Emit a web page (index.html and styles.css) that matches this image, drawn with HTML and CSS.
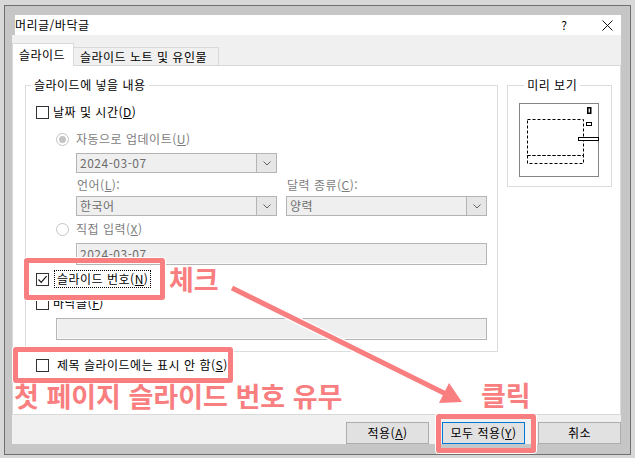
FILE: index.html
```html
<!DOCTYPE html>
<html lang="ko">
<head>
<meta charset="utf-8">
<title>머리글/바닥글</title>
<link rel="stylesheet" href="styles.css">
</head>
<body>
<div class="window">
  <div class="titlebar">
    <span class="title">머리글/바닥글</span>
    <span class="help">?</span>
    <svg class="close" width="11" height="11" viewBox="0 0 11 11"><path d="M0.5 0.5L10.5 10.5M10.5 0.5L0.5 10.5" stroke="#111" stroke-width="1" fill="none"/></svg>
  </div>
  <div class="dlg-body">
    <div class="tabs">
      <div class="tab tab-active">슬라이드</div>
      <div class="tab tab-other">슬라이드 노트 및 유인물</div>
    </div>
    <div class="panel">
      <div class="groups">
        <fieldset class="group group-main">
          <legend>슬라이드에 넣을 내용</legend>
          <div class="row row-check r1"><span class="check"></span><span class="lbl">날짜 및 시간(<u>D</u>)</span></div>
          <div class="row row-radio r2"><span class="radio radio-on"></span><span class="lbl dis">자동으로 업데이트(<u>U</u>)</span></div>
          <div class="combo combo-wide r3"><span class="combo-text">2024-03-07</span><span class="combo-btn"><svg width="8" height="5" viewBox="0 0 8 5"><path d="M0.5 0.5L4 4L7.5 0.5" fill="none" stroke="#606060"/></svg></span></div>
          <div class="pair r4"><span class="lbl dis lbl-pair">언어(<u>L</u>):</span><span class="lbl dis lbl-pair">달력 종류(<u>C</u>):</span></div>
          <div class="pair r5">
            <div class="combo"><span class="combo-text">한국어</span><span class="combo-btn"><svg width="8" height="5" viewBox="0 0 8 5"><path d="M0.5 0.5L4 4L7.5 0.5" fill="none" stroke="#606060"/></svg></span></div>
            <div class="combo"><span class="combo-text">양력</span><span class="combo-btn"><svg width="8" height="5" viewBox="0 0 8 5"><path d="M0.5 0.5L4 4L7.5 0.5" fill="none" stroke="#606060"/></svg></span></div>
          </div>
          <div class="row row-radio r6"><span class="radio"></span><span class="lbl dis">직접 입력(<u>X</u>)</span></div>
          <div class="textbox textbox-date r7">2024-03-07</div>
          <div class="row row-check r8"><span class="check"><svg width="11" height="11" viewBox="0 0 11 11"><path d="M1.5 5.5L4.2 8.3L9.6 2.2" fill="none" stroke="#1a1a1a" stroke-width="1.2"/></svg></span><span class="lbl focus">슬라이드 번호(<u>N</u>)</span></div>
          <div class="row row-check r9"><span class="check"></span><span class="lbl">바닥글(<u>F</u>)</span></div>
          <div class="textbox textbox-footer r10"></div>
        </fieldset>
        <fieldset class="group group-preview">
          <legend>미리 보기</legend>
          <svg class="preview" width="80" height="74" viewBox="0 0 80 74">
            <rect x="0.5" y="0.5" width="79" height="73" fill="#fff" stroke="#858585"/>
            <rect x="8.5" y="16.5" width="56" height="36" fill="none" stroke="#000" stroke-dasharray="3 2"/>
            <rect x="8.5" y="52.5" width="56" height="8" fill="none" stroke="#000" stroke-dasharray="3 2"/>
            <rect x="68" y="4" width="4.5" height="7" fill="#000"/>
            <rect x="69.6" y="5.5" width="1.3" height="4" fill="#fff"/>
            <rect x="67.5" y="19.5" width="5" height="3" fill="#fff" stroke="#000"/>
            <rect x="59.5" y="34.5" width="20" height="3" fill="#fff" stroke="#000"/>
          </svg>
        </fieldset>
      </div>
      <div class="row row-title"><span class="check"></span><span class="lbl">제목 슬라이드에는 표시 안 함(<u>S</u>)</span></div>
    </div>
    <div class="buttons">
      <button type="button" class="btn">적용(<u>A</u>)</button>
      <button type="button" class="btn btn-default">모두 적용(<u>Y</u>)</button>
      <button type="button" class="btn">취소</button>
    </div>
  </div>
</div>

<div class="mark mark-number"></div>
<div class="mark mark-title"></div>
<div class="mark mark-apply"></div>
<div class="note note-check">체크</div>
<div class="note note-first">첫 페이지 슬라이드 번호 유무</div>
<div class="note note-click">클릭</div>
<svg class="arrow" width="635" height="458" viewBox="0 0 635 458">
  <line x1="232" y1="288" x2="446" y2="394" stroke="#fff" stroke-width="8"/>
  <polygon points="462,402 439,403 449,383" fill="#fff" stroke="#fff" stroke-width="3" stroke-linejoin="round"/>
  <line x1="232" y1="288" x2="446" y2="394" stroke="#f87e80" stroke-width="5"/>
  <polygon points="462,402 439,403 449,383" fill="#f87e80"/>
</svg>
</body>
</html>
```

FILE: styles.css
```css
* { box-sizing: border-box; }
html, body { margin: 0; }
body {
  position: relative;
  width: 635px;
  height: 458px;
  padding: 5px 0 0 4px;
  overflow: hidden;
  background: #d8d8d8;
  font-family: "Noto Sans CJK KR", "Noto Sans", sans-serif;
  font-size: 12px;
  letter-spacing: 0.5px;
  color: #000;
}
u { text-decoration: underline; text-underline-offset: 1px; }

.window {
  width: 627px;
  height: 450px;
  border: 1px solid #6f6f6f;
  background: #c6c6c6;
  padding: 9px 9px 10px 7px;
  display: flex;
  flex-direction: column;
}
.titlebar {
  height: 20px;
  margin-left: 3px;
  background: #fff;
  display: flex;
  align-items: center;
  line-height: 20px;
}
.title { padding-left: 0; }
.help { margin-left: auto; width: 8px; text-align: center; letter-spacing: 0; }
.close { margin-left: 34px; margin-right: 8px; }

.dlg-body {
  flex: 1;
  background: #f0f0f0;
  padding-top: 8px;
  display: flex;
  flex-direction: column;
}
.tabs {
  height: 22px;
  display: flex;
  align-items: flex-end;
  position: relative;
  z-index: 1;
}
.tab {
  border: 1px solid #d9d9d9;
  border-bottom: 0;
  white-space: nowrap;
}
.tab-active {
  width: 62px;
  height: 23px;
  margin-bottom: -1px;
  background: #fff;
  padding-left: 6px;
  line-height: 21px;
}
.tab-other {
  width: 145px;
  height: 18px;
  border-left: 0;
  background: #f0f0f0;
  padding-left: 6px;
  line-height: 17px;
}

.panel {
  width: 609px;
  height: 350px;
  border: 1px solid #d9d9d9;
  background: #fff;
  padding: 11px 8px 0 12px;
}
.groups { display: flex; gap: 9px; align-items: flex-start; }
.group {
  margin: 0;
  padding: 0;
  border: 1px solid #dcdcdc;
  min-width: 0;
}
.group legend {
  margin-left: 5px;
  padding: 0 3px;
  line-height: 16px;
  font-size: 12px;
}
.group-main { width: 474px; padding-bottom: 11px; }
.group-preview { width: 105px; padding: 10px 0 9px 11px; }
.preview { display: block; }

.row { display: flex; align-items: center; height: 18px; line-height: 16px; white-space: nowrap; }
.row-check { padding-left: 10px; gap: 4px; }
.row-radio { padding-left: 30px; gap: 7px; }
.lbl { line-height: 16px; }
.dis { color: #7d7d7d; }
.focus { border: 1px dotted #000; padding: 0 2px; line-height: 16px; height: 18px; margin-left: 1px; }

.check {
  width: 13px;
  height: 13px;
  border: 1px solid #333;
  background: #fff;
  flex: none;
  display: flex;
  align-items: center;
  justify-content: center;
}
.radio {
  width: 13px;
  height: 13px;
  border: 1px solid #c4c4c4;
  border-radius: 50%;
  background: #fff;
  flex: none;
  display: flex;
  align-items: center;
  justify-content: center;
}
.radio-on::after {
  content: "";
  width: 7px;
  height: 7px;
  border-radius: 50%;
  background: #c4c4c4;
}

.r1 { margin-top: 10px; }
.r2 { margin-top: 9px; }
.r3 { margin-top: 5px; }
.r4 { margin-top: 4px; height: 16px; }
.r5 { margin-top: 3px; }
.r6 { margin-top: 4px; }
.r7 { margin-top: 5px; }
.r8 { margin-top: 5px; }
.r9 { margin-top: 6px; }
.r10 { margin-top: 6px; }

.combo {
  display: flex;
  height: 20px;
  border: 1px solid #b4b4b4;
  background: #efefef;
  color: #6d6d6d;
}
.combo-wide { width: 201px; margin-left: 50px; }
.combo-text { flex: 1; padding-left: 3px; line-height: 18px; }
.combo-btn {
  width: 20px;
  border-left: 1px solid #b4b4b4;
  background: #e6e6e6;
  display: flex;
  align-items: center;
  justify-content: center;
}
.pair {
  display: grid;
  grid-template-columns: 201px 201px;
  column-gap: 9px;
  margin-left: 50px;
}
.lbl-pair { padding-left: 1px; }

.textbox {
  height: 22px;
  border: 1px solid #b4b4b4;
  background: #efefef;
  box-shadow: inset 1px -1px 0 #fafafa;
  color: #6d6d6d;
  padding-left: 3px;
  line-height: 20px;
}
.textbox-date { width: 411px; margin-left: 50px; }
.textbox-footer { width: 431px; margin-left: 30px; }

.row-title { margin-top: 4px; padding-left: 11px; gap: 8px; }

.buttons {
  margin-top: 7px;
  display: flex;
  justify-content: flex-end;
  gap: 13px;
}
.btn {
  width: 83px;
  height: 22px;
  margin: 0;
  padding: 0;
  border: 1px solid #adadad;
  background: #e1e1e1;
  font-family: "Noto Sans CJK KR", "Noto Sans", sans-serif;
  font-size: 12px;
  letter-spacing: 0.5px;
  line-height: 20px;
  color: #000;
  text-align: center;
}
.btn-default { border-color: #0078d7; }

/* annotations */
.mark {
  position: absolute;
  border: 5px solid #f87e80;
  border-radius: 3px;
  box-shadow: 0 0 0 1px #fff;
}
.mark-number { left: 24px; top: 258px; width: 141px; height: 42px; }
.mark-title { left: 13px; top: 347px; width: 220px; height: 36px; }
.mark-apply { left: 436px; top: 414px; width: 100px; height: 39px; }
.note {
  position: absolute;
  color: #f87e80;
  font-weight: 700;
  font-size: 27px;
  line-height: 30px;
  letter-spacing: 0;
  white-space: nowrap;
}
.note-check { left: 169px; top: 264px; }
.note-first { left: 14px; top: 381px; }
.note-click { left: 481px; top: 380px; }
.arrow { position: absolute; left: 0; top: 0; pointer-events: none; }
```
